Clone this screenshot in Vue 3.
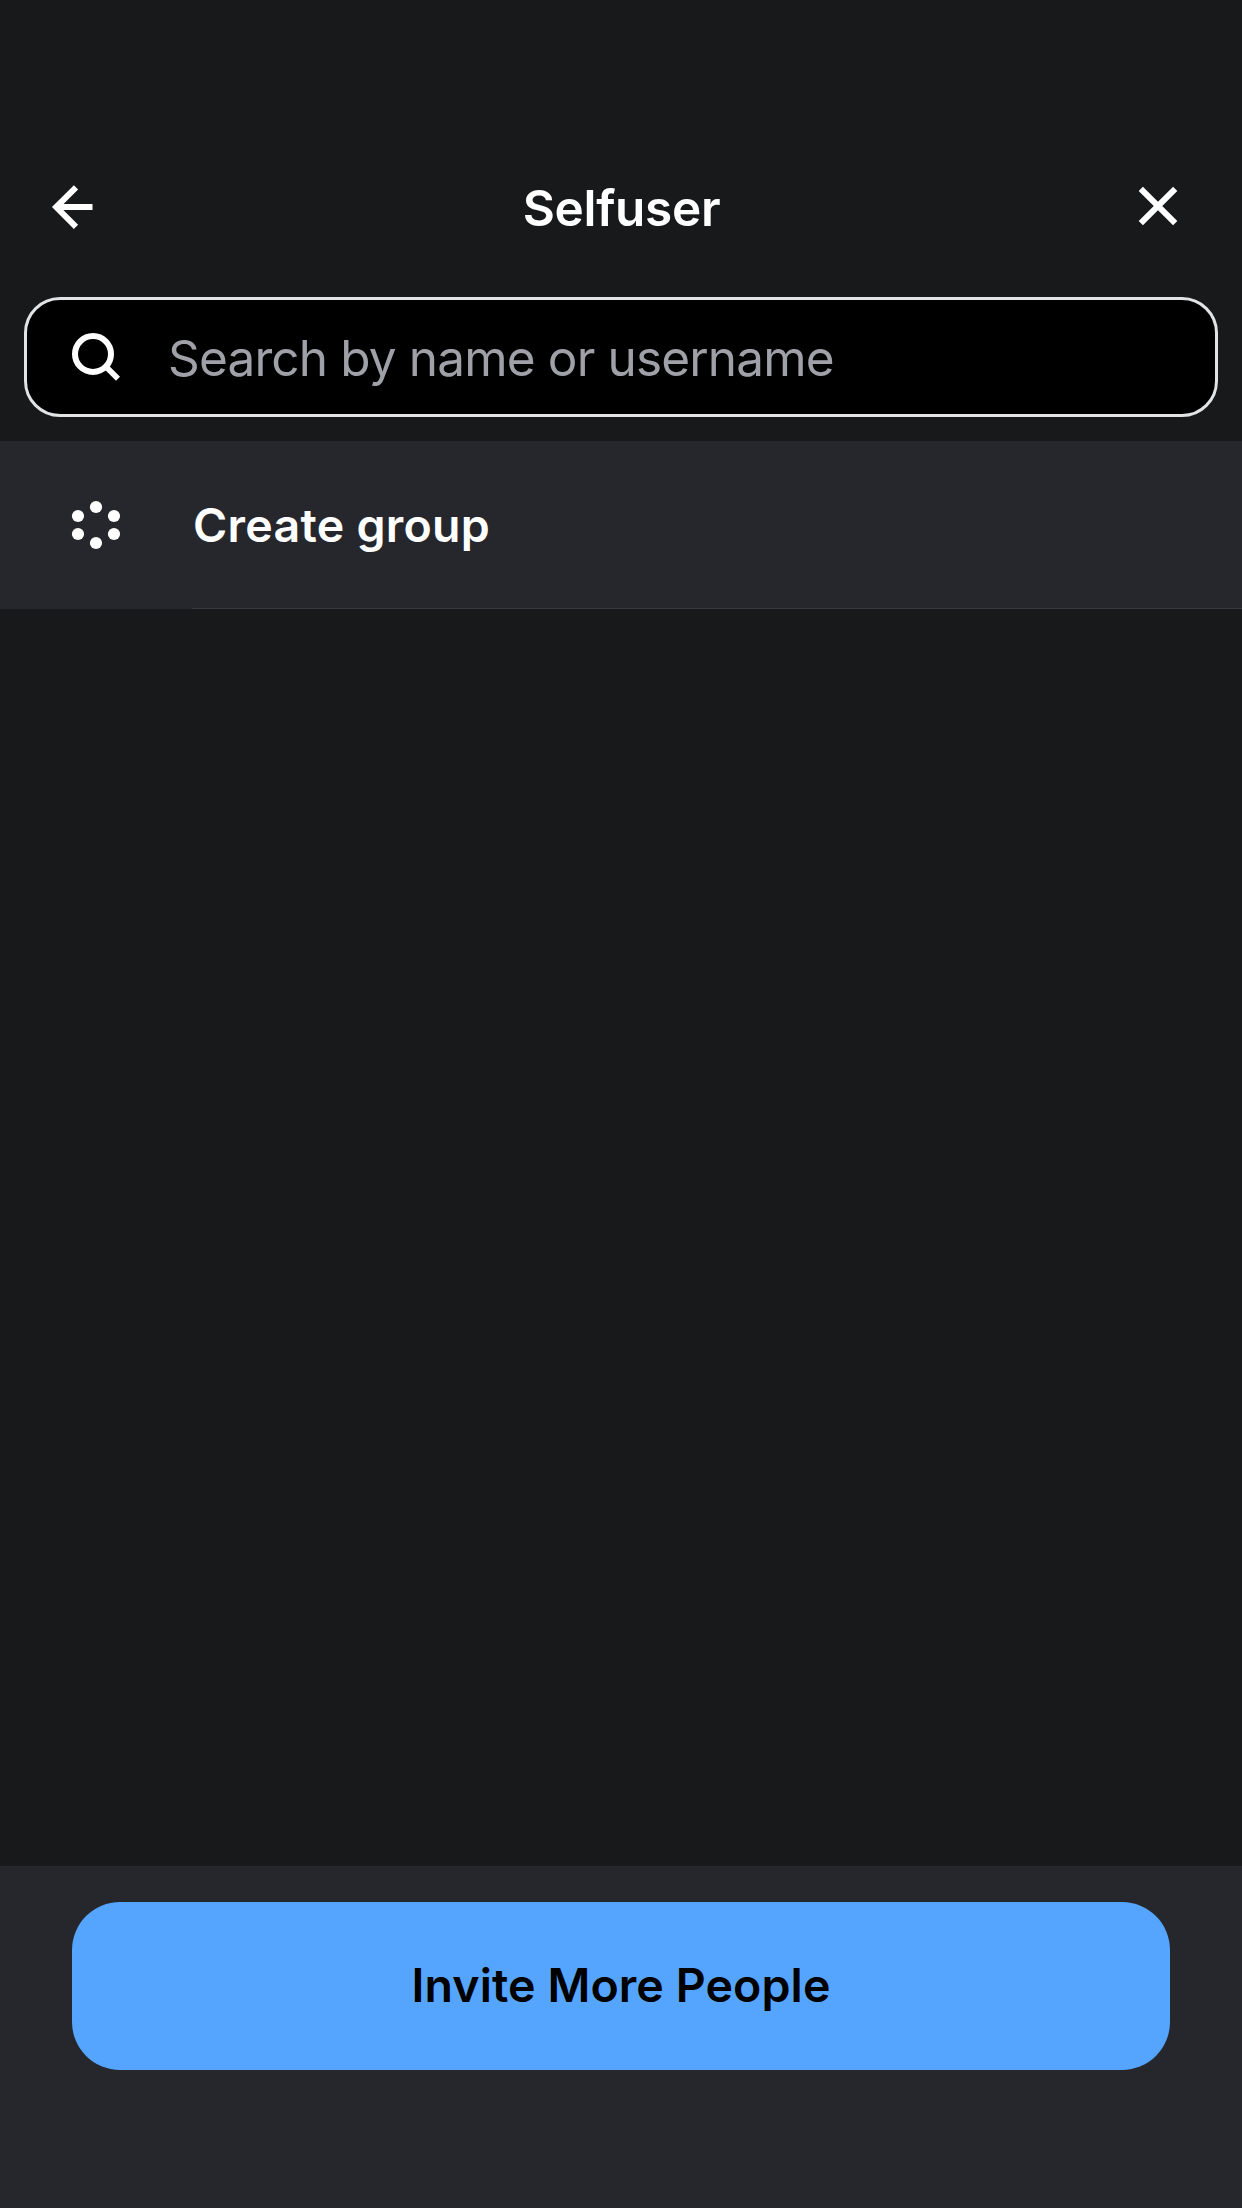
<script setup>
import { ref } from 'vue'

const title = 'Selfuser'
const query = ref('')
const dots = [
  [30, 12], [48, 21], [48, 39], [30, 48], [12, 39], [12, 21],
]
</script>

<template>
  <div class="screen">
    <header class="header">
      <button class="icon-button" aria-label="Back">
        <svg width="60" height="60" viewBox="0 0 60 60" fill="none" stroke="#fff" stroke-width="6">
          <path d="M34 9.4 14.2 29 34 48.8M16 29H50.5" />
        </svg>
      </button>
      <h1 class="title">{{ title }}</h1>
      <button class="icon-button" aria-label="Close">
        <svg width="60" height="60" viewBox="0 0 60 60" fill="none" stroke="#fff" stroke-width="6">
          <path d="M12.8 10.8 47.2 45.2M47.2 10.8 12.8 45.2" />
        </svg>
      </button>
    </header>

    <label class="search">
      <svg width="60" height="60" viewBox="0 0 60 60" fill="none" stroke="#fff" stroke-width="6">
        <circle cx="27" cy="27" r="18" />
        <path d="M39 38.8 52 51.7" stroke-width="5.7" />
      </svg>
      <input v-model="query" class="field" type="text" placeholder="Search by name or username" />
    </label>

    <div class="row">
      <svg class="row-icon" width="60" height="60" viewBox="0 0 60 60" fill="#fff">
        <circle v-for="[x, y] in dots" :key="`${x}-${y}`" :cx="x" :cy="y" r="6.1" />
      </svg>
      <div class="row-body">Create group</div>
    </div>

    <main class="list"></main>

    <footer class="footer">
      <button class="invite">Invite More People</button>
    </footer>
  </div>
</template>

<style>
html,
body {
  background: #17191a;
}
</style>

<style scoped>
.screen {
  display: flex;
  flex-direction: column;
  box-sizing: border-box;
  height: 2208px;
  background: #17191a;
  color: #fff;
  font-family: Inter, "Noto Sans", sans-serif;
}

.header {
  display: flex;
  align-items: center;
  justify-content: space-between;
  box-sizing: border-box;
  height: 297px;
  padding: 119px 54px 0 42px;
}

.icon-button {
  width: 60px;
  height: 60px;
  padding: 0;
  border: 0;
  background: none;
}

.icon-button svg,
.search svg,
.row-icon {
  display: block;
  flex: none;
}

.title {
  flex: 1;
  margin: 0 0 0 13px;
  font-size: 49.5px;
  font-weight: 600;
  line-height: 60px;
  letter-spacing: -0.3px;
  text-align: center;
}

.search {
  display: flex;
  align-items: center;
  box-sizing: border-box;
  height: 120px;
  margin: 0 24px;
  padding: 0 39px;
  border: 3px solid #e1e3e5;
  border-radius: 36px;
  background: #000;
}

.field {
  flex: 1;
  box-sizing: border-box;
  height: 62px;
  margin-left: 42px;
  padding: 2px 0 0;
  border: 0;
  outline: 0;
  background: none;
  color: #fff;
  font-family: inherit;
  font-size: 49.5px;
  line-height: 60px;
  letter-spacing: -0.84px;
}

.field::placeholder {
  color: #a0a0a8;
  opacity: 1;
}

.row {
  display: flex;
  align-items: center;
  height: 168px;
  margin-top: 24px;
  padding-left: 66px;
  background: #26272c;
}

.row-body {
  flex: 1;
  box-sizing: border-box;
  height: 168px;
  margin-left: 66px;
  padding: 56px 0 0 1px;
  border-bottom: 1px solid #373940;
  font-size: 46.5px;
  font-weight: 600;
  line-height: 56px;
  letter-spacing: 0.27px;
}

.list {
  flex: 1;
}

.footer {
  box-sizing: border-box;
  height: 342px;
  padding: 36px 72px 0;
  background: #26272c;
}

.invite {
  display: block;
  width: 100%;
  height: 168px;
  padding: 0 0 2px;
  border: 0;
  border-radius: 48px;
  background: #55a5ff;
  color: #000;
  font-family: inherit;
  font-size: 46.5px;
  font-weight: 600;
  line-height: 56px;
  letter-spacing: 0.1px;
}
</style>
